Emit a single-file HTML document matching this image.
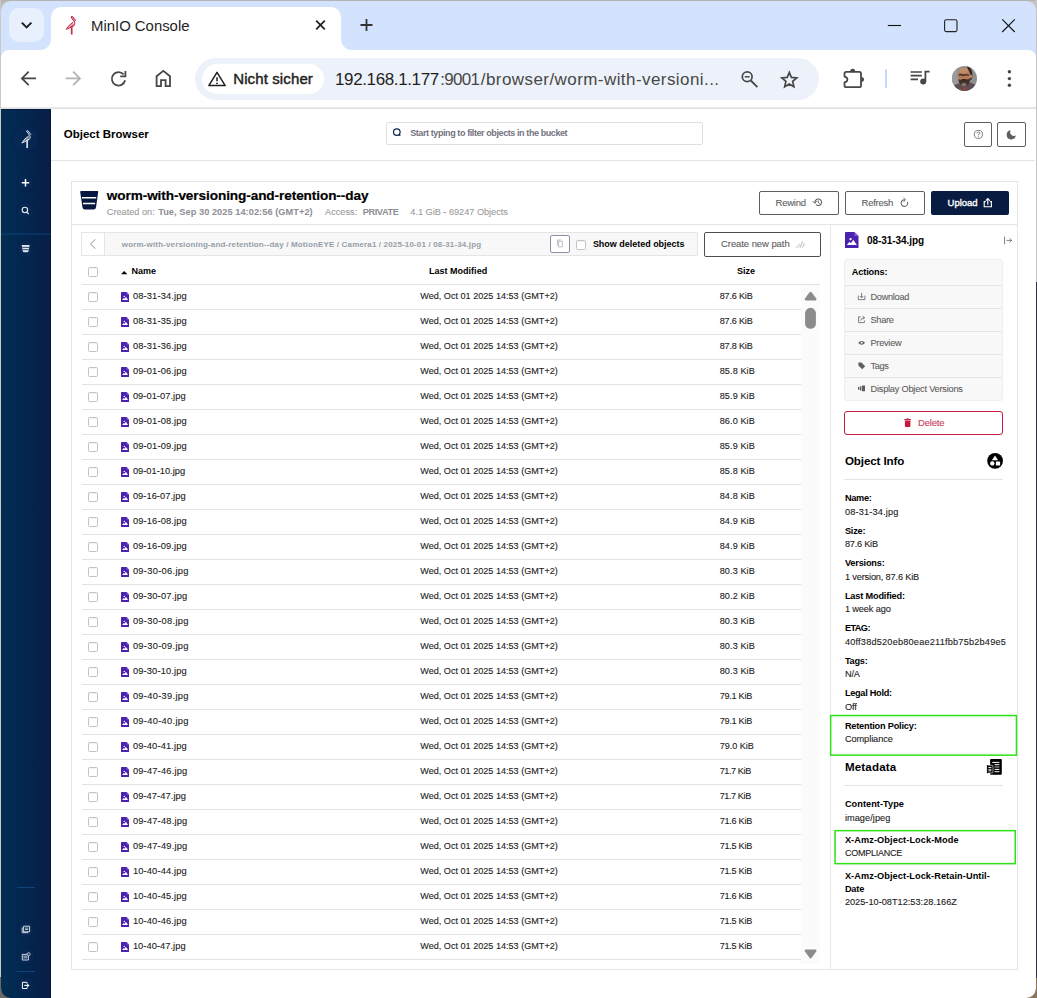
<!DOCTYPE html>
<html lang="en">
<head>
<meta charset="utf-8">
<title>MinIO Console</title>
<style>
*{box-sizing:border-box;margin:0;padding:0}
html,body{width:1037px;height:998px;overflow:hidden;background:#fff}
body{font-family:"Liberation Sans",sans-serif;color:#000;position:relative}
.abs{position:absolute}
#win{position:absolute;left:0;top:0;width:1037px;height:998px;overflow:hidden;background:#fff}
/* ---------- browser chrome ---------- */
#tabstrip{position:absolute;left:1px;top:1px;width:1035px;height:60px;background:#d3e3fd;border-radius:9px 9px 0 0}
#topedge{position:absolute;left:0;top:0;width:1037px;height:1px;background:#b4b4b4}
#leftedge{position:absolute;left:0;top:0;width:1px;height:998px;background:linear-gradient(#c9c9c9 0,#c9c9c9 977px,#6d6a66 977px,#6d6a66 100%)}
.cnr{position:absolute;width:9px;height:9px}
#cbl{left:1px;top:989px;background:radial-gradient(circle at 100% 0,rgba(0,0,0,0) 8.2px,#6d6a66 9px)}
#cbr{left:1027px;top:989px;background:radial-gradient(circle at 0 0,rgba(0,0,0,0) 8.2px,#8a755e 9px)}
#ctl{left:1px;top:1px;background:radial-gradient(circle at 100% 100%,rgba(0,0,0,0) 8.2px,#b9b9b9 9px)}
#ctr{left:1027px;top:1px;background:radial-gradient(circle at 0 100%,rgba(0,0,0,0) 8.2px,#c6c6c6 9px)}
#rightedge{position:absolute;left:1036px;top:0;width:1px;height:998px;background:linear-gradient(#c4c4c4 0,#c4c4c4 282px,#34323f 282px,#34323f 978px,#8a755e 978px,#8a755e 100%)}
#rightedge2{display:none}
#tabdd{position:absolute;left:9px;top:8px;width:35px;height:34px;border-radius:10px;background:#e8f0fe}
#tab{position:absolute;left:51px;top:7px;width:290px;height:43px;background:#fff;border-radius:10px 10px 0 0}
#tab:before,#tab:after{content:"";position:absolute;bottom:0;width:10px;height:10px;background:radial-gradient(circle at 0 0,#d3e3fd 9.5px,#fff 10px)}
#tab:before{left:-10px}
#tab:after{right:-10px;background:radial-gradient(circle at 100% 0,#d3e3fd 9.5px,#fff 10px)}
#tabtitle{position:absolute;left:91px;top:17px;font-size:14.9px;line-height:18px;color:#1f1f1f;white-space:nowrap}
#toolbar{position:absolute;left:1px;top:50px;width:1035px;height:57px;background:#fff;border-radius:8px 8px 0 0}
#tbline{position:absolute;left:1px;top:107px;width:1035px;height:2px;background:linear-gradient(#ececec,#dedede)}
#urlpill{position:absolute;left:195px;top:58px;width:624px;height:42px;border-radius:21px;background:#edf2fa}
#chip{position:absolute;left:202px;top:64px;width:122px;height:30px;border-radius:15px;background:#fff}
#chiptext{position:absolute;left:233px;top:70px;font-size:14px;font-weight:bold;line-height:18px;color:#1f1f1f;white-space:nowrap}
#urltext{position:absolute;left:334px;top:68px;font-size:17.4px;line-height:22px;color:#1f1f1f;white-space:nowrap}
#urltext span{color:#474747}
/* ---------- page ---------- */
#sidebar{position:absolute;left:1px;top:109px;width:50px;height:889px;background:linear-gradient(90deg,#022e53 0%,#03264f 50%,#081d45 100%);border-right:1px solid #06173c;border-top:1px solid #041c44;}
#pagehead-line{position:absolute;left:51px;top:160px;width:984px;height:1px;background:#e5e5e5}
#pagetitle{position:absolute;left:63.8px;top:126px;font-size:11.5px;font-weight:bold;line-height:16px;white-space:nowrap}
.t{position:absolute;white-space:nowrap;line-height:12px;-webkit-text-stroke:.1px currentColor}
.t.b{-webkit-text-stroke:0}
.cb{position:absolute;width:10px;height:10px;border:1px solid #c3c3c3;border-radius:1.5px;background:#fff;box-shadow:inset 0 1px 1px rgba(0,0,0,.06)}
</style>
</head>
<body>
<div id="win">
<div id="topedge"></div>
<div id="leftedge"></div>
<div id="tabstrip"></div>
<div id="tabdd"></div>
<div id="tab"></div>
<div id="tabtitle">MinIO Console</div>
<div id="toolbar"></div>
<div id="tbline"></div>
<div id="urlpill"></div>
<div id="chip"></div>
<div class="t" style="left:233.2px;top:70px;line-height:17px;font-size:15px;letter-spacing:0.120px;color:#1f1f1f;-webkit-text-stroke:.45px #1f1f1f">Nicht sicher</div>
<div class="t" style="left:335.0px;top:70px;line-height:19px;font-size:17px;letter-spacing:-0.378px;color:#1f1f1f;-webkit-text-stroke:0">192.168.1.177</div>
<div class="t" style="left:440.3px;top:70px;line-height:19px;font-size:17px;letter-spacing:-0.708px;color:#474747;-webkit-text-stroke:0">:9001</div>
<div class="t" style="left:480.8px;top:70px;line-height:19px;font-size:17px;letter-spacing:0.431px;color:#474747;-webkit-text-stroke:0">/browser/worm-with-versioni...</div>
<svg class="abs" style="left:0;top:0" width="1037" height="108" viewBox="0 0 1037 108" fill="none">
<defs>
<symbol id="bird" viewBox="0 0 10 19" overflow="visible">
<path d="M5.85 10.8V19" stroke="currentColor" stroke-width="1.7" fill="none"/>
<path d="M9.6 4.7L6.8 1.2Q6.1 0.4 5.5 1Q5.1 1.6 5.9 2.4L8.6 5.9Q9.4 7.3 8.7 9Q8 10.5 5.9 11.5" stroke="currentColor" stroke-width="1.05" fill="none" stroke-linecap="round"/>
<path d="M7.3 6.5Q3 9 .3 13.8Q4.2 12.7 7.7 9.6" stroke="currentColor" stroke-width="1" fill="currentColor" fill-opacity=".45" stroke-linejoin="round" stroke-linecap="round"/>
</symbol>
</defs>
<!-- tab dropdown chevron -->
<path d="M21.8 22.6L26.6 27.4L31.4 22.6" stroke="#1f1f1f" stroke-width="2"/>
<!-- favicon -->
<use href="#bird" x="65.9" y="15.7" width="9.9" height="18.8" style="color:#c72c48"/>
<!-- tab close -->
<path d="M316.2 20.7L324.8 29.3M324.8 20.7L316.2 29.3" stroke="#1f1f1f" stroke-width="1.7"/>
<!-- new tab -->
<path d="M360.5 25H372.5M366.5 19V31" stroke="#333" stroke-width="1.8"/>
<!-- window controls -->
<path d="M887.8 25.5H901" stroke="#111" stroke-width="1.1"/>
<rect x="944.6" y="19.8" width="12.4" height="11.8" rx="1.6" stroke="#222" stroke-width="1.1"/>
<path d="M1002.2 19.4L1014.8 32M1014.8 19.4L1002.2 32" stroke="#111" stroke-width="1.1"/>
<!-- back -->
<path d="M22.4 78.4H36M28.7 71.6L21.9 78.4L28.7 85.2" stroke="#474747" stroke-width="1.8"/>
<!-- forward -->
<path d="M65.6 78.4H79.4M73.1 71.6L79.9 78.4L73.1 85.2" stroke="#b3b3b3" stroke-width="1.8"/>
<!-- reload -->
<path d="M123.6 74.4A6.7 6.7 0 1 0 125.1 80.3" stroke="#474747" stroke-width="1.8"/>
<path d="M125.4 71V76.4H120.2" stroke="#474747" stroke-width="1.8"/>
<!-- home -->
<path d="M156.6 86.2V76.2L163.3 70.9L170 76.2V86.2H165.6V80.2H161V86.2Z" stroke="#474747" stroke-width="1.8"/>
<!-- warning -->
<path d="M217 72.4L225.2 85.6H208.8Z" stroke="#1f1f1f" stroke-width="1.5" stroke-linejoin="round"/>
<path d="M217 77.2V81.2" stroke="#1f1f1f" stroke-width="1.5"/>
<circle cx="217" cy="83.3" r=".9" fill="#1f1f1f"/>
<!-- zoom out -->
<circle cx="747.2" cy="76.8" r="4.9" stroke="#474747" stroke-width="1.7"/>
<path d="M750.8 80.5L757.4 87.2" stroke="#474747" stroke-width="1.8"/>
<path d="M744.8 76.8H749.6" stroke="#474747" stroke-width="1.5"/>
<!-- star -->
<path d="M789.3 72.4L791.4 77.4L796.8 77.9L792.7 81.4L793.9 86.7L789.3 83.9L784.7 86.7L785.9 81.4L781.8 77.9L787.2 77.4Z" stroke="#474747" stroke-width="1.7" stroke-linejoin="miter"/>
<!-- extension puzzle -->
<path d="M846.3 71.8H859.2Q861 71.8 861 73.6V85.4Q861 87.2 859.2 87.2H846.3Q844.5 87.2 844.5 85.4V82.4Q847.4 81.8 847.4 79.5Q847.4 77.2 844.5 76.6V73.6Q844.5 71.8 846.3 71.8Z" stroke="#474747" stroke-width="1.8" stroke-linejoin="round"/>
<path d="M850.2 71.4A2.5 2.6 0 0 1 855.2 71.4Z" fill="#474747"/><path d="M861.4 77A2.6 2.5 0 0 1 861.4 82Z" fill="#474747"/>
<!-- separator -->
<rect x="885" y="69" width="2" height="19.5" rx="1" fill="#c7d9fb"/>
<!-- media -->
<path d="M910.6 72H921.9M910.6 75.7H921.9M910.6 79.4H918" stroke="#474747" stroke-width="1.7"/>
<path d="M925.4 81.5V71.7H929.6" stroke="#474747" stroke-width="1.8"/>
<circle cx="923.2" cy="81.4" r="3" fill="#474747"/>
<!-- avatar -->
<clipPath id="avc"><circle cx="964.5" cy="78.5" r="12.5"/></clipPath>
<g clip-path="url(#avc)">
<rect x="951" y="65" width="27" height="27" fill="#8f8f8f"/>
<rect x="951" y="65" width="6.5" height="27" fill="#9a9a9a"/>
<path d="M952 92V87.5Q954 84.5 958.5 83.5L970 82.5Q975.5 84 977.5 88V92Z" fill="#5e4f54"/>
<path d="M967 66.3Q972.6 67.5 972.4 76Q972.2 79.5 970.5 80.5L968.5 72Z" fill="#33261f"/>
<ellipse cx="964.2" cy="76.2" rx="6.1" ry="8.7" fill="#b47b5b"/>
<ellipse cx="963.6" cy="70.6" rx="4.6" ry="2.6" fill="#c18c68"/>
<ellipse cx="970.9" cy="76.3" rx="1.2" ry="1.9" fill="#c08661"/>
<path d="M958.6 74.2Q961 73.2 963.2 74.6Q965.6 73.4 969 74.4V75.8Q965.8 75.2 963.2 76.2Q961 75.2 958.6 75.8Z" fill="#4a3428"/>
<path d="M958.6 79.2Q961 80 964 79.6Q967.5 80 970 78.6Q970.2 83 967.4 85.4Q964.6 86.8 961.6 85.4Q958.6 83.4 958.6 79.2Z" fill="#43332a"/>
<ellipse cx="964" cy="84.6" rx="2.6" ry="1.5" fill="#857f72"/>
<path d="M961.2 79.4Q964 78.4 967 79.4L966.4 80.6Q964 80 961.8 80.6Z" fill="#2e211b"/>
<rect x="963.6" y="87" width="1.6" height="5" fill="#b23a2e"/>
</g>
<!-- menu dots -->
<circle cx="1009.4" cy="71.8" r="1.7" fill="#474747"/><circle cx="1009.4" cy="78.6" r="1.7" fill="#474747"/><circle cx="1009.4" cy="85.3" r="1.7" fill="#474747"/>
</svg>
<div id="sidebar"></div>
<svg class="abs" style="left:0;top:108px" width="52" height="890" viewBox="0 108 52 890" fill="none">
<g fill="#0a2a58" fill-opacity=".45" stroke="#041a40" stroke-opacity=".55" stroke-width=".8">
<circle cx="25.6" cy="139.2" r="13.2"/>
<circle cx="25.5" cy="182.8" r="8.6"/><circle cx="25.5" cy="210.6" r="8.6"/><circle cx="25.6" cy="248.6" r="8.6"/>
<circle cx="25.8" cy="929.4" r="8.6"/><circle cx="25.8" cy="956.4" r="8.6"/><circle cx="25.8" cy="985.4" r="8.6"/>
</g>
<use href="#bird" x="21.6" y="129.8" width="9.5" height="18.2" style="color:#e6e9ee"/>
<!-- plus -->
<path d="M21.8 182.8H29.2M25.5 179.1V186.5" stroke="#fff" stroke-width="1.5"/>
<!-- search -->
<circle cx="24.9" cy="210" r="2.7" stroke="#e8ebf0" stroke-width="1.1"/>
<path d="M26.9 212.2L28.8 214.2" stroke="#e8ebf0" stroke-width="1.2"/>
<!-- divider -->
<rect x="1" y="233.6" width="50" height="1" fill="#0e4576"/>
<!-- bucket -->
<path d="M21.7 245H29.6L28.5 251.3Q28.3 252.3 27.3 252.3H24Q23 252.3 22.8 251.3Z" fill="#dfe3ea"/>
<path d="M22.3 247.4H29M22.7 249.7H28.6" stroke="#0a2850" stroke-width=".8"/>
<!-- small dividers -->
<rect x="17" y="887" width="18" height="1" fill="#0e4576"/>
<rect x="17" y="971" width="18" height="1" fill="#0e4576"/>
<!-- docs -->
<path d="M23.6 926.2H29.6V931.8H23.6Z" stroke="#e6e9ee" stroke-width=".9"/>
<path d="M22.2 927.4V932.7H28.2" stroke="#e6e9ee" stroke-width=".9"/>
<path d="M25 928.1H28.3M25 929.6H28.3" stroke="#e6e9ee" stroke-width=".8"/>
<!-- license -->
<path d="M22.3 954.4H28.4V960H22.3Z" stroke="#e6e9ee" stroke-width=".9"/>
<path d="M23.4 956.2H27.3M23.4 957.8H27.3" stroke="#e6e9ee" stroke-width=".8"/>
<circle cx="28.6" cy="954.2" r="1.5" fill="#0a2850" stroke="#e6e9ee" stroke-width=".8"/>
<!-- logout -->
<path d="M27 983.6V982.3H22.4V988.5H27V987.2" stroke="#fff" stroke-width="1"/>
<path d="M24.2 985.4H27.6" stroke="#fff" stroke-width="1.1"/>
<path d="M27.2 983.4L29.5 985.4L27.2 987.4Z" fill="#fff"/>
</svg>
<div id="pagetitle">Object Browser</div>
<div id="pagehead-line"></div>
<svg width="0" height="0" style="position:absolute"><defs><symbol id="fico" viewBox="0 0 8 10" overflow="visible"><path d="M.5 0H5.6L8 2.4V9.5Q8 10 7.5 10H.5Q0 10 0 9.5V.5Q0 0 .5 0Z" fill="#4b22ad"/><path d="M5.6 0L8 2.4H5.6Z" fill="#8460d8"/><path d="M1.1 7.9L2.7 5.9L3.5 6.8L4.9 4.8L7 7.9Z" fill="#fff"/><circle cx="3.3" cy="4.4" r=".7" fill="#fff"/></symbol></defs></svg>
<div class="abs" style="left:386px;top:122px;width:317px;height:23px;border:1px solid #e0e0e0;border-radius:2px;background:#fff"></div>
<svg class="abs" style="left:391px;top:126px" width="12" height="12" viewBox="391 126 12 12" fill="none"><circle cx="396.8" cy="132.1" r="3.3" stroke="#0c2245" stroke-width="1.2"/><path d="M399.3 134.7L400.3 135.8" stroke="#0c2245" stroke-width="1.3"/></svg>
<div class="t b" style="left:410.2px;top:128px;line-height:10px;font-size:9px;font-weight:bold;letter-spacing:-0.409px;color:#73737f;">Start typing to filter objects in the bucket</div>
<div class="abs" style="left:964px;top:122px;width:28px;height:25px;border:1px solid #5e5e5e;border-radius:2px;background:#fff"></div>
<div class="abs" style="left:997px;top:122px;width:29px;height:25px;border:1px solid #5e5e5e;border-radius:2px;background:#fff"></div>
<svg class="abs" style="left:964px;top:122px" width="62" height="25" viewBox="964 122 62 25" fill="none">
<circle cx="978.4" cy="134.4" r="4.1" stroke="#5e5e5e" stroke-width=".8"/>
<path d="M976.9 133.3Q976.9 132 978.4 132Q979.9 132 979.9 133.2Q979.9 134.1 978.4 134.6V135.4" stroke="#5e5e5e" stroke-width=".8"/>
<circle cx="978.4" cy="136.7" r=".5" fill="#5e5e5e"/>
<path d="M1010.6 130.3A4.6 4.6 0 1 0 1015.8 135.6A3.9 3.9 0 0 1 1010.6 130.3Z" fill="#5e5e5e"/>
</svg>
<div class="abs" style="left:71px;top:181px;width:947px;height:789px;border:1px solid #e5e5e5;background:#fff"></div>
<div class="abs" style="left:72px;top:224px;width:945px;height:1px;background:#e5e5e5"></div>
<svg class="abs" style="left:79px;top:190px" width="21" height="21" viewBox="79 190 21 21" fill="none">
<path d="M81.1 191H97.3Q98.4 191 98.2 192.1L96 207.4Q95.7 209.5 93.6 209.5H84.9Q82.8 209.5 82.5 207.4L80.2 192.1Q80 191 81.1 191Z" fill="#07183e"/>
<path d="M82 197.7H96.2M83 203.6H95.1" stroke="#fff" stroke-width="1.5"/>
</svg>
<div class="t b" style="left:106.8px;top:188px;line-height:15px;font-size:13.6px;font-weight:bold;letter-spacing:-0.089px;color:#000;-webkit-text-stroke:.2px #000">worm-with-versioning-and-retention--day</div>
<div class="t" style="left:106.8px;top:207px;line-height:10px;font-size:9.2px;letter-spacing:-0.010px;color:#9b9b9b;">Created on:</div>
<div class="t b" style="left:158.2px;top:207px;line-height:10px;font-size:9.2px;font-weight:bold;letter-spacing:0.068px;color:#8d8d95;">Tue, Sep 30 2025 14:02:56 (GMT+2)</div>
<div class="t" style="left:325.0px;top:207px;line-height:10px;font-size:9.2px;letter-spacing:0.005px;color:#9b9b9b;">Access:</div>
<div class="t b" style="left:362.7px;top:207px;line-height:10px;font-size:9.2px;font-weight:bold;letter-spacing:-0.379px;color:#8d8d95;">PRIVATE</div>
<div class="t" style="left:410.3px;top:207px;line-height:10px;font-size:9.2px;letter-spacing:-0.020px;color:#9b9b9b;">4.1 GiB - 69247 Objects</div>
<div class="abs" style="left:759px;top:191px;width:80px;height:24px;border:1px solid #5e5e5e;border-radius:2px;background:#fff"></div>
<div class="abs" style="left:845px;top:191px;width:80px;height:24px;border:1px solid #5e5e5e;border-radius:2px;background:#fff"></div>
<div class="abs" style="left:931px;top:191px;width:78px;height:24px;border-radius:2px;background:#081c42"></div>
<div class="t" style="left:775.6px;top:197px;line-height:11px;font-size:9.5px;letter-spacing:-0.264px;color:#5e5e5e;">Rewind</div>
<div class="t" style="left:861.6px;top:197px;line-height:11px;font-size:9.5px;letter-spacing:-0.281px;color:#5e5e5e;">Refresh</div>
<div class="t" style="left:947.6px;top:197px;line-height:11px;font-size:9.5px;letter-spacing:-0.051px;color:#fff;-webkit-text-stroke:.35px #fff">Upload</div>
<svg class="abs" style="left:810px;top:195px" width="185" height="16" viewBox="810 195 185 16" fill="none">
<path d="M815 202.9A3.3 3.3 0 1 1 816 204.7" stroke="#5e5e5e" stroke-width="1.05"/>
<path d="M812.9 201.3L814.9 203.3L816.6 201.1" stroke="#5e5e5e" stroke-width="1"/>
<path d="M818.2 200.4V202.6L819.7 203.6" stroke="#5e5e5e" stroke-width="1"/>
<path d="M904.5 199.8A3.3 3.3 0 1 0 907.5 201.9" stroke="#5e5e5e" stroke-width="1.05"/>
<path d="M903.6 197.9L905.6 199.8L903.6 201.6" stroke="#5e5e5e" stroke-width="1"/>
<path d="M985.7 201.6H984.2V206.8H991.4V201.6H989.9" stroke="#fff" stroke-width="1.1"/>
<path d="M987.8 204.8V198.8M985.8 200.6L987.8 198.5L989.8 200.6" stroke="#fff" stroke-width="1.1"/>
</svg>
<div class="abs" style="left:81px;top:232px;width:617px;height:24px;border:1px solid #e5e5e5;background:#f8f8f8"></div>
<div class="abs" style="left:82px;top:233px;width:23px;height:22px;background:#fff;border-right:1px solid #e5e5e5"></div>
<svg class="abs" style="left:86px;top:236px" width="14" height="16" viewBox="86 236 14 16" fill="none"><path d="M95.4 239.3L90.6 244L95.4 248.7" stroke="#7c8794" stroke-width=".9"/></svg>
<div class="t b" style="left:121.8px;top:240px;line-height:9px;font-size:8px;font-weight:bold;letter-spacing:0.153px;color:#969fa8;">worm-with-versioning-and-retention--day / MotionEYE / Camera1 / 2025-10-01 / 08-31-34.jpg</div>
<div class="abs" style="left:550px;top:235px;width:20px;height:18px;border:1px solid #8a8fa3;border-radius:2px;background:#fff"></div>
<svg class="abs" style="left:555px;top:239px" width="10" height="10" viewBox="555 239 10 10" fill="none"><path d="M558.6 241.2H562.3V246.9H558.6Z" stroke="#a9adb8" stroke-width=".8"/><path d="M557.4 245.4V240H561" stroke="#a9adb8" stroke-width=".8"/></svg>
<div class="cb" style="left:576px;top:240px"></div>
<div class="t b" style="left:592.9px;top:239px;line-height:10px;font-size:9px;font-weight:bold;letter-spacing:-0.021px;color:#000;">Show deleted objects</div>
<div class="abs" style="left:704px;top:232px;width:117px;height:25px;border:1px solid #4f4f4f;border-radius:2px;background:#fff"></div>
<div class="t" style="left:721.0px;top:238px;line-height:11px;font-size:9.5px;letter-spacing:-0.074px;color:#5e5e5e;">Create new path</div>
<svg class="abs" style="left:794px;top:239px" width="14" height="12" viewBox="794 239 14 12" fill="none"><path d="M796 247.6L796.4 246.4M797.8 247.6L799.4 243.8M800 247.6L802.6 241.2M802.4 247.6L804.4 243" stroke="#a9a9a9" stroke-width=".8"/></svg>
<div class="cb" style="left:88px;top:267px"></div>
<svg class="abs" style="left:120px;top:269px" width="9" height="7" viewBox="120 269 9 7"><path d="M121 274.3L124.2 270.9L127.4 274.3Z" fill="#000"/></svg>
<div class="t b" style="left:131.5px;top:266px;line-height:10px;font-size:9px;font-weight:bold;letter-spacing:-0.003px;color:#000;">Name</div>
<div class="t b" style="left:428.9px;top:266px;line-height:10px;font-size:9px;font-weight:bold;letter-spacing:0.023px;color:#000;">Last Modified</div>
<div class="t b" style="left:737.0px;top:266px;line-height:10px;font-size:9px;font-weight:bold;letter-spacing:0.023px;color:#000;">Size</div>
<div class="abs" style="left:82px;top:284px;width:738px;height:1px;background:#e2e2e2"></div>
<div class="abs" style="left:801px;top:285px;width:19px;height:679px;background:#fbfbfb"></div>
<svg class="abs" style="left:801px;top:285px" width="19" height="675" viewBox="801 285 19 675">
<path d="M806 299.2L810.6 293L815.2 299.2Z" fill="#8b8b8b" stroke="#8b8b8b" stroke-width="2.6" stroke-linejoin="round"/>
<rect x="805.1" y="307.8" width="10.8" height="21" rx="5.4" fill="#8b8b8b"/>
<path d="M806 950.8L810.6 957L815.2 950.8Z" fill="#8b8b8b" stroke="#8b8b8b" stroke-width="2.6" stroke-linejoin="round"/>
</svg>
<div class="cb" style="left:88px;top:292px"></div>
<svg class="abs" style="left:121px;top:292px" width="8" height="10"><use href="#fico"/></svg>
<div class="t" style="left:132.9px;top:291px;line-height:10px;font-size:9.3px;letter-spacing:0.150px;color:#1a1a1a;">08-31-34.jpg</div>
<div class="t" style="left:420.3px;top:291px;line-height:10px;font-size:9.1px;letter-spacing:-0.002px;color:#1a1a1a;">Wed, Oct 01 2025 14:53 (GMT+2)</div>
<div class="t" style="left:719.7px;top:291px;line-height:10px;font-size:9.1px;letter-spacing:-0.185px;color:#1a1a1a;">87.6 KiB</div>
<div class="abs" style="left:82px;top:309px;width:719px;height:1px;background:#e2e2e2"></div>
<div class="cb" style="left:88px;top:317px"></div>
<svg class="abs" style="left:121px;top:317px" width="8" height="10"><use href="#fico"/></svg>
<div class="t" style="left:132.9px;top:316px;line-height:10px;font-size:9.3px;letter-spacing:0.150px;color:#1a1a1a;">08-31-35.jpg</div>
<div class="t" style="left:420.3px;top:316px;line-height:10px;font-size:9.1px;letter-spacing:-0.002px;color:#1a1a1a;">Wed, Oct 01 2025 14:53 (GMT+2)</div>
<div class="t" style="left:719.7px;top:316px;line-height:10px;font-size:9.1px;letter-spacing:-0.185px;color:#1a1a1a;">87.6 KiB</div>
<div class="abs" style="left:82px;top:334px;width:719px;height:1px;background:#e2e2e2"></div>
<div class="cb" style="left:88px;top:342px"></div>
<svg class="abs" style="left:121px;top:342px" width="8" height="10"><use href="#fico"/></svg>
<div class="t" style="left:132.9px;top:341px;line-height:10px;font-size:9.3px;letter-spacing:0.150px;color:#1a1a1a;">08-31-36.jpg</div>
<div class="t" style="left:420.3px;top:341px;line-height:10px;font-size:9.1px;letter-spacing:-0.002px;color:#1a1a1a;">Wed, Oct 01 2025 14:53 (GMT+2)</div>
<div class="t" style="left:719.7px;top:341px;line-height:10px;font-size:9.1px;letter-spacing:-0.185px;color:#1a1a1a;">87.8 KiB</div>
<div class="abs" style="left:82px;top:359px;width:719px;height:1px;background:#e2e2e2"></div>
<div class="cb" style="left:88px;top:367px"></div>
<svg class="abs" style="left:121px;top:367px" width="8" height="10"><use href="#fico"/></svg>
<div class="t" style="left:132.9px;top:366px;line-height:10px;font-size:9.3px;letter-spacing:0.150px;color:#1a1a1a;">09-01-06.jpg</div>
<div class="t" style="left:420.3px;top:366px;line-height:10px;font-size:9.1px;letter-spacing:-0.002px;color:#1a1a1a;">Wed, Oct 01 2025 14:53 (GMT+2)</div>
<div class="t" style="left:719.7px;top:366px;line-height:10px;font-size:9.1px;letter-spacing:0.103px;color:#1a1a1a;">85.8 KiB</div>
<div class="abs" style="left:82px;top:384px;width:719px;height:1px;background:#e2e2e2"></div>
<div class="cb" style="left:88px;top:392px"></div>
<svg class="abs" style="left:121px;top:392px" width="8" height="10"><use href="#fico"/></svg>
<div class="t" style="left:132.9px;top:391px;line-height:10px;font-size:9.3px;letter-spacing:0.041px;color:#1a1a1a;">09-01-07.jpg</div>
<div class="t" style="left:420.3px;top:391px;line-height:10px;font-size:9.1px;letter-spacing:-0.002px;color:#1a1a1a;">Wed, Oct 01 2025 14:53 (GMT+2)</div>
<div class="t" style="left:719.7px;top:391px;line-height:10px;font-size:9.1px;letter-spacing:0.103px;color:#1a1a1a;">85.9 KiB</div>
<div class="abs" style="left:82px;top:409px;width:719px;height:1px;background:#e2e2e2"></div>
<div class="cb" style="left:88px;top:417px"></div>
<svg class="abs" style="left:121px;top:417px" width="8" height="10"><use href="#fico"/></svg>
<div class="t" style="left:132.9px;top:416px;line-height:10px;font-size:9.3px;letter-spacing:0.150px;color:#1a1a1a;">09-01-08.jpg</div>
<div class="t" style="left:420.3px;top:416px;line-height:10px;font-size:9.1px;letter-spacing:-0.002px;color:#1a1a1a;">Wed, Oct 01 2025 14:53 (GMT+2)</div>
<div class="t" style="left:719.7px;top:416px;line-height:10px;font-size:9.1px;letter-spacing:0.103px;color:#1a1a1a;">86.0 KiB</div>
<div class="abs" style="left:82px;top:434px;width:719px;height:1px;background:#e2e2e2"></div>
<div class="cb" style="left:88px;top:442px"></div>
<svg class="abs" style="left:121px;top:442px" width="8" height="10"><use href="#fico"/></svg>
<div class="t" style="left:132.9px;top:441px;line-height:10px;font-size:9.3px;letter-spacing:0.150px;color:#1a1a1a;">09-01-09.jpg</div>
<div class="t" style="left:420.3px;top:441px;line-height:10px;font-size:9.1px;letter-spacing:-0.002px;color:#1a1a1a;">Wed, Oct 01 2025 14:53 (GMT+2)</div>
<div class="t" style="left:719.7px;top:441px;line-height:10px;font-size:9.1px;letter-spacing:0.103px;color:#1a1a1a;">85.9 KiB</div>
<div class="abs" style="left:82px;top:459px;width:719px;height:1px;background:#e2e2e2"></div>
<div class="cb" style="left:88px;top:467px"></div>
<svg class="abs" style="left:121px;top:467px" width="8" height="10"><use href="#fico"/></svg>
<div class="t" style="left:132.9px;top:466px;line-height:10px;font-size:9.3px;letter-spacing:-0.000px;color:#1a1a1a;">09-01-10.jpg</div>
<div class="t" style="left:420.3px;top:466px;line-height:10px;font-size:9.1px;letter-spacing:-0.002px;color:#1a1a1a;">Wed, Oct 01 2025 14:53 (GMT+2)</div>
<div class="t" style="left:719.7px;top:466px;line-height:10px;font-size:9.1px;letter-spacing:0.103px;color:#1a1a1a;">85.8 KiB</div>
<div class="abs" style="left:82px;top:484px;width:719px;height:1px;background:#e2e2e2"></div>
<div class="cb" style="left:88px;top:492px"></div>
<svg class="abs" style="left:121px;top:492px" width="8" height="10"><use href="#fico"/></svg>
<div class="t" style="left:132.9px;top:491px;line-height:10px;font-size:9.3px;letter-spacing:0.041px;color:#1a1a1a;">09-16-07.jpg</div>
<div class="t" style="left:420.3px;top:491px;line-height:10px;font-size:9.1px;letter-spacing:-0.002px;color:#1a1a1a;">Wed, Oct 01 2025 14:53 (GMT+2)</div>
<div class="t" style="left:719.7px;top:491px;line-height:10px;font-size:9.1px;letter-spacing:0.103px;color:#1a1a1a;">84.8 KiB</div>
<div class="abs" style="left:82px;top:509px;width:719px;height:1px;background:#e2e2e2"></div>
<div class="cb" style="left:88px;top:517px"></div>
<svg class="abs" style="left:121px;top:517px" width="8" height="10"><use href="#fico"/></svg>
<div class="t" style="left:132.9px;top:516px;line-height:10px;font-size:9.3px;letter-spacing:0.150px;color:#1a1a1a;">09-16-08.jpg</div>
<div class="t" style="left:420.3px;top:516px;line-height:10px;font-size:9.1px;letter-spacing:-0.002px;color:#1a1a1a;">Wed, Oct 01 2025 14:53 (GMT+2)</div>
<div class="t" style="left:719.7px;top:516px;line-height:10px;font-size:9.1px;letter-spacing:0.103px;color:#1a1a1a;">84.9 KiB</div>
<div class="abs" style="left:82px;top:534px;width:719px;height:1px;background:#e2e2e2"></div>
<div class="cb" style="left:88px;top:542px"></div>
<svg class="abs" style="left:121px;top:542px" width="8" height="10"><use href="#fico"/></svg>
<div class="t" style="left:132.9px;top:541px;line-height:10px;font-size:9.3px;letter-spacing:0.150px;color:#1a1a1a;">09-16-09.jpg</div>
<div class="t" style="left:420.3px;top:541px;line-height:10px;font-size:9.1px;letter-spacing:-0.002px;color:#1a1a1a;">Wed, Oct 01 2025 14:53 (GMT+2)</div>
<div class="t" style="left:719.7px;top:541px;line-height:10px;font-size:9.1px;letter-spacing:0.103px;color:#1a1a1a;">84.9 KiB</div>
<div class="abs" style="left:82px;top:559px;width:719px;height:1px;background:#e2e2e2"></div>
<div class="cb" style="left:88px;top:567px"></div>
<svg class="abs" style="left:121px;top:567px" width="8" height="10"><use href="#fico"/></svg>
<div class="t" style="left:132.9px;top:566px;line-height:10px;font-size:9.3px;letter-spacing:0.300px;color:#1a1a1a;">09-30-06.jpg</div>
<div class="t" style="left:420.3px;top:566px;line-height:10px;font-size:9.1px;letter-spacing:-0.002px;color:#1a1a1a;">Wed, Oct 01 2025 14:53 (GMT+2)</div>
<div class="t" style="left:719.7px;top:566px;line-height:10px;font-size:9.1px;letter-spacing:0.103px;color:#1a1a1a;">80.3 KiB</div>
<div class="abs" style="left:82px;top:584px;width:719px;height:1px;background:#e2e2e2"></div>
<div class="cb" style="left:88px;top:592px"></div>
<svg class="abs" style="left:121px;top:592px" width="8" height="10"><use href="#fico"/></svg>
<div class="t" style="left:132.9px;top:591px;line-height:10px;font-size:9.3px;letter-spacing:0.191px;color:#1a1a1a;">09-30-07.jpg</div>
<div class="t" style="left:420.3px;top:591px;line-height:10px;font-size:9.1px;letter-spacing:-0.002px;color:#1a1a1a;">Wed, Oct 01 2025 14:53 (GMT+2)</div>
<div class="t" style="left:719.7px;top:591px;line-height:10px;font-size:9.1px;letter-spacing:0.103px;color:#1a1a1a;">80.2 KiB</div>
<div class="abs" style="left:82px;top:609px;width:719px;height:1px;background:#e2e2e2"></div>
<div class="cb" style="left:88px;top:617px"></div>
<svg class="abs" style="left:121px;top:617px" width="8" height="10"><use href="#fico"/></svg>
<div class="t" style="left:132.9px;top:616px;line-height:10px;font-size:9.3px;letter-spacing:0.300px;color:#1a1a1a;">09-30-08.jpg</div>
<div class="t" style="left:420.3px;top:616px;line-height:10px;font-size:9.1px;letter-spacing:-0.002px;color:#1a1a1a;">Wed, Oct 01 2025 14:53 (GMT+2)</div>
<div class="t" style="left:719.7px;top:616px;line-height:10px;font-size:9.1px;letter-spacing:0.103px;color:#1a1a1a;">80.3 KiB</div>
<div class="abs" style="left:82px;top:634px;width:719px;height:1px;background:#e2e2e2"></div>
<div class="cb" style="left:88px;top:642px"></div>
<svg class="abs" style="left:121px;top:642px" width="8" height="10"><use href="#fico"/></svg>
<div class="t" style="left:132.9px;top:641px;line-height:10px;font-size:9.3px;letter-spacing:0.300px;color:#1a1a1a;">09-30-09.jpg</div>
<div class="t" style="left:420.3px;top:641px;line-height:10px;font-size:9.1px;letter-spacing:-0.002px;color:#1a1a1a;">Wed, Oct 01 2025 14:53 (GMT+2)</div>
<div class="t" style="left:719.7px;top:641px;line-height:10px;font-size:9.1px;letter-spacing:0.103px;color:#1a1a1a;">80.3 KiB</div>
<div class="abs" style="left:82px;top:659px;width:719px;height:1px;background:#e2e2e2"></div>
<div class="cb" style="left:88px;top:667px"></div>
<svg class="abs" style="left:121px;top:667px" width="8" height="10"><use href="#fico"/></svg>
<div class="t" style="left:132.9px;top:666px;line-height:10px;font-size:9.3px;letter-spacing:0.150px;color:#1a1a1a;">09-30-10.jpg</div>
<div class="t" style="left:420.3px;top:666px;line-height:10px;font-size:9.1px;letter-spacing:-0.002px;color:#1a1a1a;">Wed, Oct 01 2025 14:53 (GMT+2)</div>
<div class="t" style="left:719.7px;top:666px;line-height:10px;font-size:9.1px;letter-spacing:0.103px;color:#1a1a1a;">80.3 KiB</div>
<div class="abs" style="left:82px;top:684px;width:719px;height:1px;background:#e2e2e2"></div>
<div class="cb" style="left:88px;top:692px"></div>
<svg class="abs" style="left:121px;top:692px" width="8" height="10"><use href="#fico"/></svg>
<div class="t" style="left:132.9px;top:691px;line-height:10px;font-size:9.3px;letter-spacing:0.300px;color:#1a1a1a;">09-40-39.jpg</div>
<div class="t" style="left:420.3px;top:691px;line-height:10px;font-size:9.1px;letter-spacing:-0.002px;color:#1a1a1a;">Wed, Oct 01 2025 14:53 (GMT+2)</div>
<div class="t" style="left:719.7px;top:691px;line-height:10px;font-size:9.1px;letter-spacing:-0.260px;color:#1a1a1a;">79.1 KiB</div>
<div class="abs" style="left:82px;top:709px;width:719px;height:1px;background:#e2e2e2"></div>
<div class="cb" style="left:88px;top:717px"></div>
<svg class="abs" style="left:121px;top:717px" width="8" height="10"><use href="#fico"/></svg>
<div class="t" style="left:132.9px;top:716px;line-height:10px;font-size:9.3px;letter-spacing:0.300px;color:#1a1a1a;">09-40-40.jpg</div>
<div class="t" style="left:420.3px;top:716px;line-height:10px;font-size:9.1px;letter-spacing:-0.002px;color:#1a1a1a;">Wed, Oct 01 2025 14:53 (GMT+2)</div>
<div class="t" style="left:719.7px;top:716px;line-height:10px;font-size:9.1px;letter-spacing:-0.260px;color:#1a1a1a;">79.1 KiB</div>
<div class="abs" style="left:82px;top:734px;width:719px;height:1px;background:#e2e2e2"></div>
<div class="cb" style="left:88px;top:742px"></div>
<svg class="abs" style="left:121px;top:742px" width="8" height="10"><use href="#fico"/></svg>
<div class="t" style="left:132.9px;top:741px;line-height:10px;font-size:9.3px;letter-spacing:0.150px;color:#1a1a1a;">09-40-41.jpg</div>
<div class="t" style="left:420.3px;top:741px;line-height:10px;font-size:9.1px;letter-spacing:-0.002px;color:#1a1a1a;">Wed, Oct 01 2025 14:53 (GMT+2)</div>
<div class="t" style="left:719.7px;top:741px;line-height:10px;font-size:9.1px;letter-spacing:-0.047px;color:#1a1a1a;">79.0 KiB</div>
<div class="abs" style="left:82px;top:759px;width:719px;height:1px;background:#e2e2e2"></div>
<div class="cb" style="left:88px;top:767px"></div>
<svg class="abs" style="left:121px;top:767px" width="8" height="10"><use href="#fico"/></svg>
<div class="t" style="left:132.9px;top:766px;line-height:10px;font-size:9.3px;letter-spacing:0.191px;color:#1a1a1a;">09-47-46.jpg</div>
<div class="t" style="left:420.3px;top:766px;line-height:10px;font-size:9.1px;letter-spacing:-0.002px;color:#1a1a1a;">Wed, Oct 01 2025 14:53 (GMT+2)</div>
<div class="t" style="left:719.7px;top:766px;line-height:10px;font-size:9.1px;letter-spacing:-0.410px;color:#1a1a1a;">71.7 KiB</div>
<div class="abs" style="left:82px;top:784px;width:719px;height:1px;background:#e2e2e2"></div>
<div class="cb" style="left:88px;top:792px"></div>
<svg class="abs" style="left:121px;top:792px" width="8" height="10"><use href="#fico"/></svg>
<div class="t" style="left:132.9px;top:791px;line-height:10px;font-size:9.3px;letter-spacing:0.083px;color:#1a1a1a;">09-47-47.jpg</div>
<div class="t" style="left:420.3px;top:791px;line-height:10px;font-size:9.1px;letter-spacing:-0.002px;color:#1a1a1a;">Wed, Oct 01 2025 14:53 (GMT+2)</div>
<div class="t" style="left:719.7px;top:791px;line-height:10px;font-size:9.1px;letter-spacing:-0.410px;color:#1a1a1a;">71.7 KiB</div>
<div class="abs" style="left:82px;top:809px;width:719px;height:1px;background:#e2e2e2"></div>
<div class="cb" style="left:88px;top:817px"></div>
<svg class="abs" style="left:121px;top:817px" width="8" height="10"><use href="#fico"/></svg>
<div class="t" style="left:132.9px;top:816px;line-height:10px;font-size:9.3px;letter-spacing:0.191px;color:#1a1a1a;">09-47-48.jpg</div>
<div class="t" style="left:420.3px;top:816px;line-height:10px;font-size:9.1px;letter-spacing:-0.002px;color:#1a1a1a;">Wed, Oct 01 2025 14:53 (GMT+2)</div>
<div class="t" style="left:719.7px;top:816px;line-height:10px;font-size:9.1px;letter-spacing:-0.260px;color:#1a1a1a;">71.6 KiB</div>
<div class="abs" style="left:82px;top:834px;width:719px;height:1px;background:#e2e2e2"></div>
<div class="cb" style="left:88px;top:842px"></div>
<svg class="abs" style="left:121px;top:842px" width="8" height="10"><use href="#fico"/></svg>
<div class="t" style="left:132.9px;top:841px;line-height:10px;font-size:9.3px;letter-spacing:0.191px;color:#1a1a1a;">09-47-49.jpg</div>
<div class="t" style="left:420.3px;top:841px;line-height:10px;font-size:9.1px;letter-spacing:-0.002px;color:#1a1a1a;">Wed, Oct 01 2025 14:53 (GMT+2)</div>
<div class="t" style="left:719.7px;top:841px;line-height:10px;font-size:9.1px;letter-spacing:-0.260px;color:#1a1a1a;">71.5 KiB</div>
<div class="abs" style="left:82px;top:859px;width:719px;height:1px;background:#e2e2e2"></div>
<div class="cb" style="left:88px;top:867px"></div>
<svg class="abs" style="left:121px;top:867px" width="8" height="10"><use href="#fico"/></svg>
<div class="t" style="left:132.9px;top:866px;line-height:10px;font-size:9.3px;letter-spacing:0.150px;color:#1a1a1a;">10-40-44.jpg</div>
<div class="t" style="left:420.3px;top:866px;line-height:10px;font-size:9.1px;letter-spacing:-0.002px;color:#1a1a1a;">Wed, Oct 01 2025 14:53 (GMT+2)</div>
<div class="t" style="left:719.7px;top:866px;line-height:10px;font-size:9.1px;letter-spacing:-0.260px;color:#1a1a1a;">71.5 KiB</div>
<div class="abs" style="left:82px;top:884px;width:719px;height:1px;background:#e2e2e2"></div>
<div class="cb" style="left:88px;top:892px"></div>
<svg class="abs" style="left:121px;top:892px" width="8" height="10"><use href="#fico"/></svg>
<div class="t" style="left:132.9px;top:891px;line-height:10px;font-size:9.3px;letter-spacing:0.150px;color:#1a1a1a;">10-40-45.jpg</div>
<div class="t" style="left:420.3px;top:891px;line-height:10px;font-size:9.1px;letter-spacing:-0.002px;color:#1a1a1a;">Wed, Oct 01 2025 14:53 (GMT+2)</div>
<div class="t" style="left:719.7px;top:891px;line-height:10px;font-size:9.1px;letter-spacing:-0.260px;color:#1a1a1a;">71.6 KiB</div>
<div class="abs" style="left:82px;top:909px;width:719px;height:1px;background:#e2e2e2"></div>
<div class="cb" style="left:88px;top:917px"></div>
<svg class="abs" style="left:121px;top:917px" width="8" height="10"><use href="#fico"/></svg>
<div class="t" style="left:132.9px;top:916px;line-height:10px;font-size:9.3px;letter-spacing:0.150px;color:#1a1a1a;">10-40-46.jpg</div>
<div class="t" style="left:420.3px;top:916px;line-height:10px;font-size:9.1px;letter-spacing:-0.002px;color:#1a1a1a;">Wed, Oct 01 2025 14:53 (GMT+2)</div>
<div class="t" style="left:719.7px;top:916px;line-height:10px;font-size:9.1px;letter-spacing:-0.260px;color:#1a1a1a;">71.5 KiB</div>
<div class="abs" style="left:82px;top:934px;width:719px;height:1px;background:#e2e2e2"></div>
<div class="cb" style="left:88px;top:942px"></div>
<svg class="abs" style="left:121px;top:942px" width="8" height="10"><use href="#fico"/></svg>
<div class="t" style="left:132.9px;top:941px;line-height:10px;font-size:9.3px;letter-spacing:0.041px;color:#1a1a1a;">10-40-47.jpg</div>
<div class="t" style="left:420.3px;top:941px;line-height:10px;font-size:9.1px;letter-spacing:-0.002px;color:#1a1a1a;">Wed, Oct 01 2025 14:53 (GMT+2)</div>
<div class="t" style="left:719.7px;top:941px;line-height:10px;font-size:9.1px;letter-spacing:-0.260px;color:#1a1a1a;">71.5 KiB</div>
<div class="abs" style="left:82px;top:959px;width:719px;height:1px;background:#e2e2e2"></div>
<div class="abs" style="left:830px;top:225px;width:1px;height:744px;background:#e8e8e8"></div>
<svg class="abs" style="left:845.4px;top:231.7px" width="13.5" height="16.4" viewBox="0 0 8 10" preserveAspectRatio="none"><use href="#fico"/></svg>
<div class="t b" style="left:866.9px;top:235px;line-height:11px;font-size:10px;font-weight:bold;letter-spacing:-0.042px;color:#000;">08-31-34.jpg</div>
<svg class="abs" style="left:1003px;top:235px" width="11" height="11" viewBox="1003 235 11 11" fill="none"><path d="M1004.6 236.6V244.2M1006.6 240.4H1011.6M1009.6 238.4L1011.7 240.4L1009.6 242.4" stroke="#5e5e5e" stroke-width=".8"/></svg>
<div class="abs" style="left:844px;top:259px;width:159px;height:142px;border:1px solid #eeeeee;border-radius:3px;background:#f8f8f8"></div>
<div class="abs" style="left:845px;top:285px;width:157px;height:1px;background:#e6e6e6"></div>
<div class="abs" style="left:845px;top:308px;width:157px;height:1px;background:#e6e6e6"></div>
<div class="abs" style="left:845px;top:331px;width:157px;height:1px;background:#e6e6e6"></div>
<div class="abs" style="left:845px;top:354px;width:157px;height:1px;background:#e6e6e6"></div>
<div class="abs" style="left:845px;top:377px;width:157px;height:1px;background:#e6e6e6"></div>
<div class="t b" style="left:851.8px;top:267px;line-height:10px;font-size:9.2px;font-weight:bold;letter-spacing:-0.156px;color:#000;">Actions:</div>
<div class="t" style="left:870.5px;top:292px;line-height:10px;font-size:9.2px;letter-spacing:-0.282px;color:#5e5e5e;">Download</div>
<div class="t" style="left:870.5px;top:315px;line-height:10px;font-size:9.2px;letter-spacing:-0.283px;color:#5e5e5e;">Share</div>
<div class="t" style="left:870.5px;top:338px;line-height:10px;font-size:9.2px;letter-spacing:-0.254px;color:#5e5e5e;">Preview</div>
<div class="t" style="left:870.5px;top:361px;line-height:10px;font-size:9.2px;letter-spacing:-0.376px;color:#5e5e5e;">Tags</div>
<div class="t" style="left:870.5px;top:384px;line-height:10px;font-size:9.2px;letter-spacing:-0.210px;color:#5e5e5e;">Display Object Versions</div>
<svg class="abs" style="left:856px;top:290px" width="12" height="106" viewBox="856 290 12 106" fill="none">
<path d="M858.3 295.6V299.6H864.9V295.6" stroke="#5e5e5e" stroke-width=".8"/>
<path d="M861.6 292.8V297.6M859.9 296L861.6 297.8L863.3 296" stroke="#5e5e5e" stroke-width=".8"/>
<path d="M864.4 320.4V322.6H858.6V316.8H860.8" stroke="#5e5e5e" stroke-width=".8"/>
<path d="M860.6 320.6Q861.2 318 864.3 317.6M862.6 316.2L864.6 317.5L863.2 319.4" stroke="#5e5e5e" stroke-width=".8"/>
<path d="M858.1 342.8Q861.6 339 865.1 342.8Q861.6 346.6 858.1 342.8Z" fill="#5e5e5e"/>
<circle cx="861.6" cy="342.8" r="1" fill="#f8f8f8"/>
<path d="M858.4 362.4H861.4L865.2 366.2L862.2 369.2L858.4 365.4Z" fill="#5e5e5e"/>
<path d="M858 387H859.3V389.8H858ZM859.9 386.3H861.4V390.5H859.9ZM862 385.4H865V391.2H862Z" fill="#5e5e5e"/>
</svg>
<div class="abs" style="left:844px;top:411px;width:159px;height:24px;border:1.2px solid #c51b3f;border-radius:3px;background:#fff"></div>
<svg class="abs" style="left:903px;top:417px" width="10" height="11" viewBox="903 417 10 11"><path d="M904.3 419.4H911V419.9H904.3ZM906.4 418.6H908.9V419.4H906.4ZM904.9 420.5H910.4V426.2Q910.4 427 909.6 427H905.7Q904.9 427 904.9 426.2Z" fill="#c51b3f"/><rect x="904.3" y="419.1" width="6.7" height="1" fill="#c51b3f"/></svg>
<div class="t" style="left:918.1px;top:417px;line-height:11px;font-size:9.5px;letter-spacing:-0.193px;color:#c83b55;">Delete</div>
<div class="t b" style="left:844.9px;top:455px;line-height:12px;font-size:11.6px;font-weight:bold;letter-spacing:-0.104px;color:#000;">Object Info</div>
<svg class="abs" style="left:986px;top:452px" width="18" height="18" viewBox="986 452 18 18"><circle cx="995.1" cy="460.8" r="7.9" fill="#000"/>
<path d="M995 455.9L997.7 460.1H992.3Z" fill="#fff" stroke="#fff" stroke-width=".5" stroke-linejoin="round"/><circle cx="992.3" cy="463.4" r="2.2" fill="#fff"/><rect x="995.9" y="461.4" width="4.2" height="4.1" rx=".5" fill="#fff"/></svg>
<div class="abs" style="left:844px;top:479px;width:159px;height:1px;background:#e5e5e5"></div>
<div class="t b" style="left:844.9px;top:493px;line-height:10px;font-size:9.2px;font-weight:bold;letter-spacing:-0.297px;color:#000;">Name:</div>
<div class="t" style="left:844.9px;top:507px;line-height:10px;font-size:9.2px;letter-spacing:0.168px;color:#1a1a1a;">08-31-34.jpg</div>
<div class="t b" style="left:844.9px;top:526px;line-height:10px;font-size:9.2px;font-weight:bold;letter-spacing:-0.189px;color:#000;">Size:</div>
<div class="t" style="left:844.9px;top:539px;line-height:10px;font-size:9.2px;letter-spacing:-0.229px;color:#1a1a1a;">87.6 KiB</div>
<div class="t b" style="left:844.9px;top:558px;line-height:10px;font-size:9.2px;font-weight:bold;letter-spacing:-0.185px;color:#000;">Versions:</div>
<div class="t" style="left:844.9px;top:572px;line-height:10px;font-size:9.2px;letter-spacing:-0.153px;color:#1a1a1a;">1 version, 87.6 KiB</div>
<div class="t b" style="left:844.9px;top:591px;line-height:10px;font-size:9.2px;font-weight:bold;letter-spacing:-0.169px;color:#000;">Last Modified:</div>
<div class="t" style="left:844.9px;top:604px;line-height:10px;font-size:9.2px;letter-spacing:-0.109px;color:#1a1a1a;">1 week ago</div>
<div class="t b" style="left:844.9px;top:623px;line-height:10px;font-size:9.2px;font-weight:bold;letter-spacing:-0.580px;color:#000;">ETAG:</div>
<div class="t" style="left:844.9px;top:637px;line-height:10px;font-size:9.2px;letter-spacing:0.194px;color:#1a1a1a;">40ff38d520eb80eae211fbb75b2b49e5</div>
<div class="t b" style="left:844.9px;top:656px;line-height:10px;font-size:9.2px;font-weight:bold;letter-spacing:-0.224px;color:#000;">Tags:</div>
<div class="t" style="left:844.9px;top:669px;line-height:10px;font-size:9.2px;letter-spacing:-0.105px;color:#1a1a1a;">N/A</div>
<div class="t b" style="left:844.9px;top:688px;line-height:10px;font-size:9.2px;font-weight:bold;letter-spacing:-0.284px;color:#000;">Legal Hold:</div>
<div class="t" style="left:844.9px;top:702px;line-height:10px;font-size:9.2px;letter-spacing:-0.028px;color:#1a1a1a;">Off</div>
<div class="t b" style="left:844.9px;top:721px;line-height:10px;font-size:9.2px;font-weight:bold;letter-spacing:-0.202px;color:#000;">Retention Policy:</div>
<div class="t" style="left:844.9px;top:734px;line-height:10px;font-size:9.2px;letter-spacing:-0.061px;color:#1a1a1a;">Compliance</div>
<div class="t b" style="left:844.9px;top:761px;line-height:12px;font-size:11.6px;font-weight:bold;letter-spacing:0.168px;color:#000;">Metadata</div>
<svg class="abs" style="left:986px;top:758px" width="18" height="18" viewBox="986 758 18 18"><rect x="990.1" y="759" width="11.7" height="15.8" rx=".8" fill="#000"/><path d="M992.2 762.4H999.4M994.6 764.7H999.4M994.6 769.4H999.4M994.6 771.7H999.4" stroke="#fff" stroke-width="1"/><path d="M994.6 767H999.4" stroke="#999" stroke-width="1.2"/><rect x="987.2" y="765.2" width="5.8" height="7.8" rx=".8" fill="#000" stroke="#fff" stroke-width=".6"/><rect x="986.9" y="765" width="1" height="8.2" fill="#000"/><path d="M988.4 767.5H991.4" stroke="#fff" stroke-width=".9"/><rect x="988.4" y="768.8" width="3" height="2.6" fill="#aaa"/></svg>
<div class="abs" style="left:844px;top:785px;width:159px;height:1px;background:#e5e5e5"></div>
<div class="t b" style="left:844.9px;top:799px;line-height:10px;font-size:9.2px;font-weight:bold;letter-spacing:0.048px;color:#000;">Content-Type</div>
<div class="t" style="left:844.9px;top:813px;line-height:10px;font-size:9.2px;letter-spacing:0.055px;color:#1a1a1a;">image/jpeg</div>
<div class="t b" style="left:844.9px;top:835px;line-height:10px;font-size:9.2px;font-weight:bold;letter-spacing:0.092px;color:#000;">X-Amz-Object-Lock-Mode</div>
<div class="t" style="left:844.9px;top:848px;line-height:10px;font-size:9px;letter-spacing:-0.251px;color:#1a1a1a;">COMPLIANCE</div>
<div class="t b" style="left:844.9px;top:871px;line-height:10px;font-size:9.2px;font-weight:bold;letter-spacing:0.084px;color:#000;">X-Amz-Object-Lock-Retain-Until-</div>
<div class="t b" style="left:844.9px;top:884px;line-height:10px;font-size:9.2px;font-weight:bold;letter-spacing:-0.178px;color:#000;">Date</div>
<div class="t" style="left:844.9px;top:897px;line-height:10px;font-size:9.2px;letter-spacing:0.006px;color:#1a1a1a;">2025-10-08T12:53:28.166Z</div>
<svg class="abs" style="left:828px;top:713px" width="192" height="155" viewBox="828 713 192 155" fill="none"><rect x="830.65" y="715.55" width="185.8" height="39.6" stroke="#2be216" stroke-width="1.5"/><rect x="835.05" y="830.65" width="180.2" height="33" stroke="#2be216" stroke-width="1.5"/></svg>
<div id="rightedge"></div>
<div class="cnr" id="cbl"></div><div class="cnr" id="cbr"></div><div class="cnr" id="ctl"></div><div class="cnr" id="ctr"></div>
<div id="rightedge2"></div>
</div>
</body>
</html>
